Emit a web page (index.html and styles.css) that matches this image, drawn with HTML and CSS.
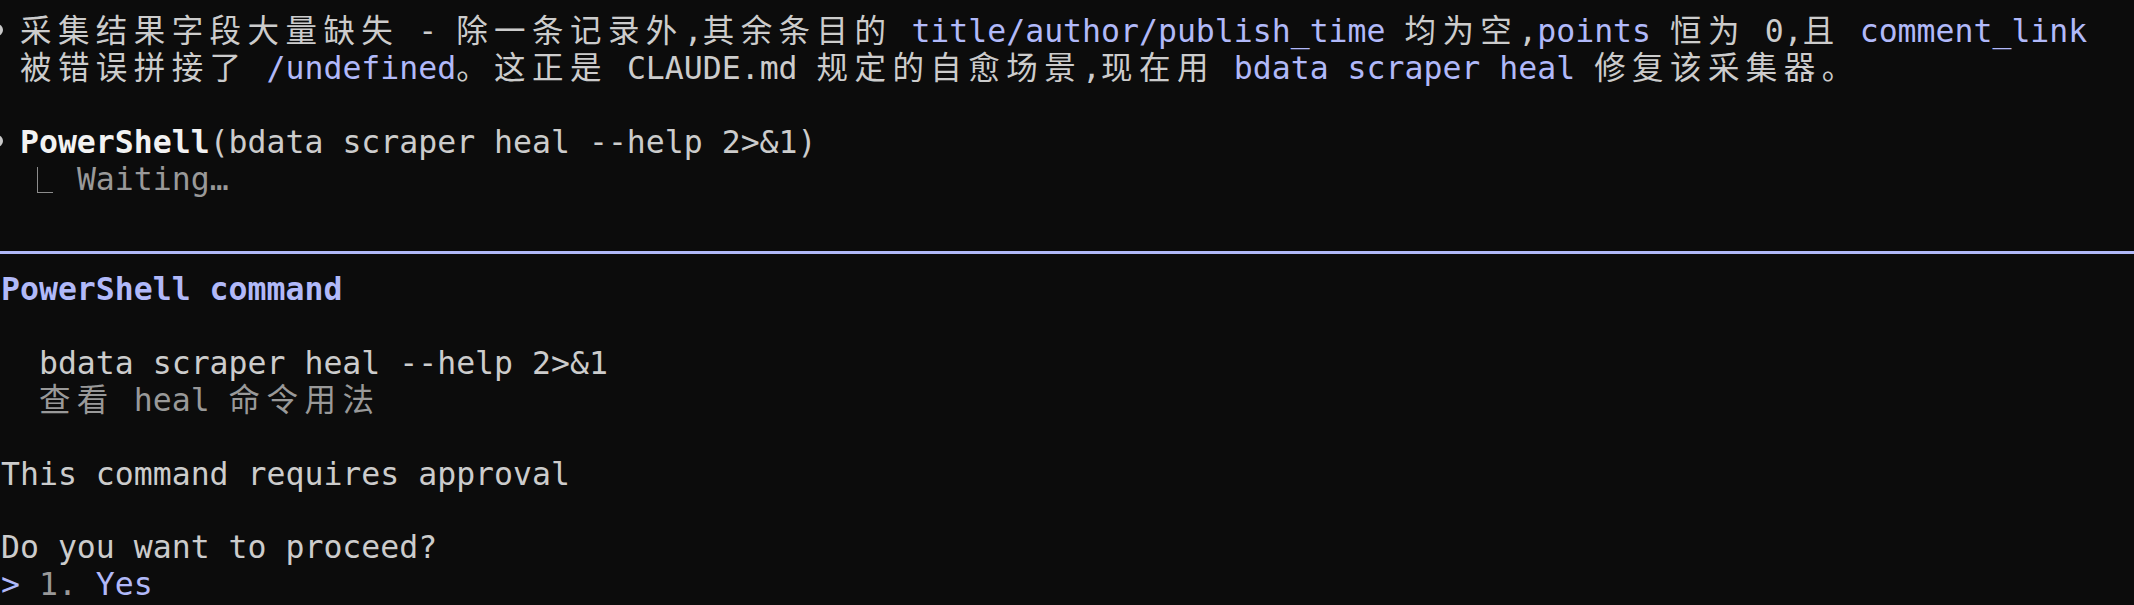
FILE: index.html
```html
<!DOCTYPE html>
<html lang="zh-CN">
<head>
<meta charset="utf-8">
<title>Terminal</title>
<link rel="stylesheet" href="styles.css">
</head>
<body>
<main class="term">
  <div class="row"><span class="dot"></span><span class="cjk">采集结果字段大量缺失</span> - <span class="cjk">除一条记录外</span>,<span class="cjk">其余条目的</span> <span class="hl">title/author/publish_time</span> <span class="cjk">均为空</span>,<span class="hl">points</span> <span class="cjk">恒为</span> 0,<span class="cjk">且</span> <span class="hl">comment_link</span></div>
  <div class="row"> <span class="cjk">被错误拼接了</span> <span class="hl">/undefined</span><span class="cjk">。这正是</span> CLAUDE.md <span class="cjk">规定的自愈场景</span>,<span class="cjk">现在用</span> <span class="hl">bdata scraper heal</span> <span class="cjk">修复该采集器。</span></div>
  <div class="row"></div>
  <div class="row"><span class="dot"></span><b class="tool">PowerShell</b>(bdata scraper heal --help 2&gt;&amp;1)</div>
  <div class="row"><span class="elbow"></span><span class="dim">Waiting…</span></div>
  <div class="row"></div>
  <div class="rule"></div>
  <div class="row"><b class="hl">PowerShell command</b></div>
  <div class="row"></div>
  <div class="row">  bdata scraper heal --help 2&gt;&amp;1</div>
  <div class="row dim">  <span class="cjk">查看</span> heal <span class="cjk">命令用法</span></div>
  <div class="row"></div>
  <div class="row">This command requires approval</div>
  <div class="row"></div>
  <div class="row">Do you want to proceed?</div>
  <div class="row"><span class="hl">&gt;</span> <span class="dim">1.</span> <span class="hl">Yes</span></div>
</main>
</body>
</html>
```

FILE: styles.css
```css
html, body {
  margin: 0;
  padding: 0;
  background: #0c0c0c;
  height: 605px;
  overflow: hidden;
}

.term {
  padding: 12.95px 0 0 1px;
  font-family: "DejaVu Sans Mono", "Noto Sans CJK SC", monospace;
  font-size: 31.5px;
  color: #cccccc;
}

.row {
  height: 36.9px;
  line-height: 36.9px;
  white-space: pre;
}

.cjk {
  font-family: "Noto Sans CJK SC", sans-serif;
  letter-spacing: 6.43px;
  line-height: 0.9;
}

.hl {
  color: #b1b9f9;
}

.dim {
  color: #999999;
}

.tool {
  color: #f2f2f2;
  font-weight: bold;
}

b.hl {
  font-weight: bold;
}

.dot {
  display: inline-block;
  width: 12px;
  height: 12px;
  border-radius: 50%;
  background: #c8c8c8;
  margin-left: -10px;
  margin-right: 16.97px;
  vertical-align: 5.8px;
}

.elbow {
  display: inline-block;
  box-sizing: border-box;
  width: 16px;
  height: 26px;
  margin-left: 36px;
  margin-right: 23.9px;
  border-left: 1.5px solid #8c8c8c;
  border-bottom: 1.5px solid #8c8c8c;
  vertical-align: -3px;
}

.rule {
  height: 36.9px;
  margin-left: -1px;
  display: flex;
  align-items: center;
}

.rule::before {
  content: "";
  flex: 1;
  height: 3px;
  background: #b1b9f9;
}
```
